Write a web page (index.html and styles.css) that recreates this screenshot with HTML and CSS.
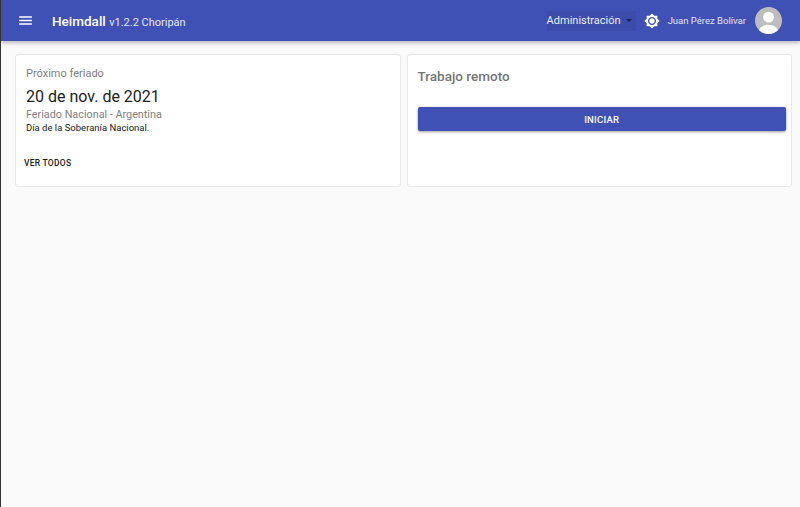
FILE: index.html
```html
<!DOCTYPE html>
<html lang="es">
<head>
    <meta charset="UTF-8">
    <meta name="viewport" content="width=device-width, initial-scale=1.0">
    <title>Heimdall</title>
    <link rel="stylesheet" href="styles.css">
</head>
<body>
    <header class="toolbar">
        <button type="button" class="menu-button" aria-label="Menu">
            <svg viewBox="0 0 24 24" width="17" height="17"><path d="M3 18h18v-2H3v2zm0-5h18v-2H3v2zm0-7v2h18V6H3z"/></svg>
        </button>
        <div class="brand">Heimdall <span class="version">v1.2.2 Choripán</span></div>
        <div class="toolbar-right">
            <div class="role-select">
                <span>Administración</span>
                <span class="caret"></span>
            </div>
            <svg class="theme-icon" viewBox="0 0 24 24"><path d="M20 8.69V4h-4.69L12 .69 8.69 4H4v4.69L.69 12 4 15.31V20h4.69L12 23.31 15.31 20H20v-4.69L23.31 12 20 8.69zM12 18c-3.31 0-6-2.69-6-6s2.69-6 6-6 6 2.69 6 6-2.69 6-6 6zm0-10c-2.21 0-4 1.79-4 4s1.79 4 4 4 4-1.79 4-4-1.79-4-4-4z"/></svg>
            <span class="user-name">Juan Pérez Bolívar</span>
            <div class="avatar">
                <svg viewBox="0 0 28 28" width="27" height="27">
                    <circle cx="14" cy="10.500" r="5.600"/>
                    <path d="M3.500 28c0-6.500 5-9.500 10.500-9.500s10.500 3 10.500 9.500z"/>
                </svg>
            </div>
        </div>
    </header>

    <main class="cards">
        <section class="card">
            <div class="holiday-label">Próximo feriado</div>
            <div class="holiday-date">20 de nov. de 2021</div>
            <div class="holiday-type">Feriado Nacional - Argentina</div>
            <div class="holiday-name">Día de la Soberanía Nacional.</div>
            <a class="see-all" href="#">VER TODOS</a>
        </section>
        <section class="card card-remote">
            <h2 class="card-title">Trabajo remoto</h2>
            <button type="button" class="start-button">INICIAR</button>
        </section>
    </main>
</body>
</html>
```

FILE: styles.css
```css
html, body {
    height: 100%;
}

body {
    margin: 0;
    font-family: Roboto, sans-serif;
    background-color: #fafafa;
    border-left: 1px solid #333333;
    box-sizing: border-box;
}

.toolbar {
    display: flex;
    align-items: center;
    height: 41px;
    padding: 0 18px 0 16px;
    background-color: #3f51b5;
    color: #ffffff;
    box-shadow: 0 2px 4px rgba(0, 0, 0, 0.25);
    box-sizing: border-box;
}

.menu-button {
    display: flex;
    width: 17px;
    height: 17px;
    padding: 0;
    border: none;
    background: none;
    fill: #ffffff;
}

.brand {
    margin-left: 18px;
    font-size: 13.500px;
    font-weight: 500;
}

.version {
    font-size: 11px;
    font-weight: 400;
    opacity: 0.85;
}

.toolbar-right {
    display: flex;
    align-items: center;
    margin-left: auto;
}

.role-select {
    display: flex;
    align-items: center;
    height: 20px;
    padding-right: 4px;
    background-color: #3b4cab;
    font-size: 11px;
    opacity: 0.9;
}

.caret {
    width: 0;
    height: 0;
    margin-left: 5px;
    border-left: 3.500px solid transparent;
    border-right: 3.500px solid transparent;
    border-top: 3.500px solid rgba(0, 0, 0, 0.6);
}

.theme-icon {
    width: 16px;
    height: 16px;
    margin-left: 8px;
    fill: #ffffff;
}

.user-name {
    margin-left: 8px;
    font-size: 9.500px;
    opacity: 0.85;
}

.avatar {
    width: 27px;
    height: 27px;
    margin-left: 9px;
    border-radius: 50%;
    overflow: hidden;
    background-color: #bdbdbd;
    fill: #ffffff;
}

.cards {
    display: grid;
    grid-template-columns: 1fr 1fr;
    gap: 6px;
    padding: 13px 8px 0 14px;
}

.card {
    height: 133px;
    padding: 12px 10px 10px;
    background-color: #ffffff;
    border: 1px solid #e8e8e8;
    border-radius: 3px;
    box-sizing: border-box;
}

.holiday-label {
    font-size: 11px;
    color: #808080;
}

.holiday-date {
    margin-top: 7px;
    font-size: 16px;
    color: #212121;
}

.holiday-type {
    margin-top: 2px;
    font-size: 10.800px;
    color: #808080;
}

.holiday-name {
    margin-top: 1px;
    font-size: 9.500px;
    color: #212121;
}

.see-all {
    display: block;
    margin: 25px 0 0 -2px;
    font-size: 8.500px;
    font-weight: 500;
    letter-spacing: 0.25px;
    color: #212121;
    text-decoration: none;
}

.card-remote {
    padding-right: 5px;
}

.card-title {
    margin: 1px 0 0;
    font-size: 13.500px;
    font-weight: 500;
    color: #757575;
}

.start-button {
    display: block;
    width: 100%;
    height: 24px;
    margin-top: 23px;
    border: none;
    border-radius: 2px;
    background-color: #3f51b5;
    color: #ffffff;
    font-family: Roboto, sans-serif;
    font-size: 9.500px;
    font-weight: 500;
    letter-spacing: 0.25px;
    box-shadow: 0 1px 3px rgba(0, 0, 0, 0.4);
}
```
